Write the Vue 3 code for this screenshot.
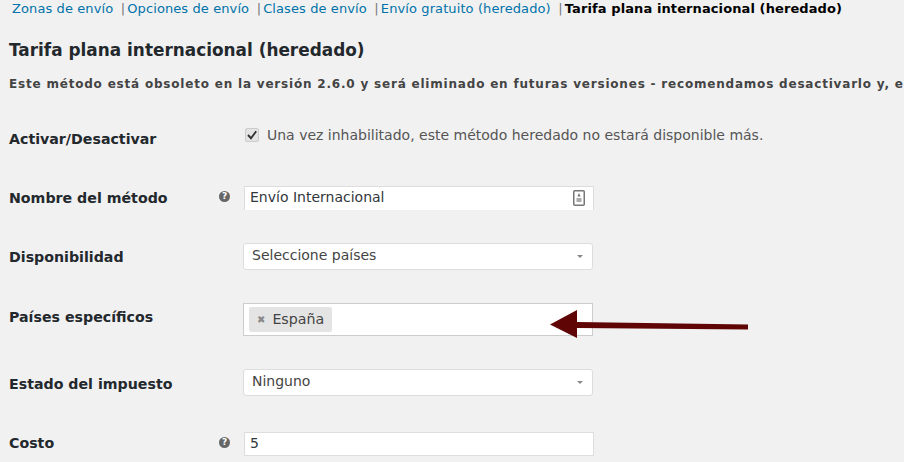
<template>
  <div class="page">
    <ul class="tabs">
      <li v-for="(tab, i) in tabs" :key="tab">
        <span v-if="i > 0" class="sep">|</span>
        <a :class="{ current: i === tabs.length - 1 }">{{ tab }}</a>
      </li>
    </ul>

    <h2>Tarifa plana internacional (heredado)</h2>
    <p class="notice">Este método está obsoleto en la versión 2.6.0 y será eliminado en futuras versiones - recomendamos desactivarlo y, en su lugar, usar</p>

    <div class="row row-check">
      <label>Activar/Desactivar</label>
      <div class="help"></div>
      <div class="check-line">
        <span class="checkbox">
          <svg width="10" height="10" viewBox="0 0 10 10"><path d="M1 5l3 3.2L9.2 1.2" fill="none" stroke="#333" stroke-width="1.9" /></svg>
        </span>
        <span>Una vez inhabilitado, este método heredado no estará disponible más.</span>
      </div>
    </div>

    <div class="row row-name">
      <label>Nombre del método</label>
      <div class="help"><i class="tip">?</i></div>
      <div class="input open">
        <span>Envío Internacional</span>
        <svg class="field-icon" width="12" height="16" viewBox="0 0 12 16">
          <rect x="0.75" y="0.75" width="10.5" height="14.5" rx="1" fill="#fff" stroke="#777" stroke-width="1.5" />
          <path d="M6 3l1.6 3.4H4.4z" fill="#777" />
          <rect x="3.5" y="8" width="5" height="4" fill="#aaa" />
        </svg>
      </div>
    </div>

    <div class="row row-avail">
      <label>Disponibilidad</label>
      <div class="help"></div>
      <div class="select"><span>Seleccione países</span><b class="caret"></b></div>
    </div>

    <div class="row row-countries">
      <label>Países específicos</label>
      <div class="help"></div>
      <div class="multi">
        <span class="chip"><i class="x">✖</i><span class="chip-text">España</span></span>
      </div>
    </div>

    <div class="row row-tax">
      <label>Estado del impuesto</label>
      <div class="help"></div>
      <div class="select"><span>Ninguno</span><b class="caret"></b></div>
    </div>

    <div class="row row-cost">
      <label>Costo</label>
      <div class="help"><i class="tip">?</i></div>
      <div class="input cost"><span>5</span></div>
    </div>

    <!-- flecha dibujada encima de la captura -->
    <svg class="arrow" width="200" height="30" viewBox="0 0 200 30">
      <path d="M1 15.5L28 1v12l171 2.5v5L28 19v10z" fill="#5f0505" />
    </svg>
  </div>
</template>

<script setup>
const tabs = [
  'Zonas de envío',
  'Opciones de envío',
  'Clases de envío',
  'Envío gratuito (heredado)',
  'Tarifa plana internacional (heredado)',
]
</script>

<style>
body {
  background: #f1f1f1;
}
</style>

<style scoped>
.page {
  position: relative;
  width: 904px;
  height: 462px;
  overflow: hidden;
  background: #f1f1f1;
  color: #23282d;
  font-family: "DejaVu Sans", sans-serif;
  font-size: 14px;
}

.tabs {
  display: flex;
  margin: 0;
  padding: 0 0 0 12px;
  list-style: none;
  height: 17px;
  font-size: 13px;
  line-height: 17px;
  letter-spacing: 0.1px;
  white-space: nowrap;
}
.tabs li {
  margin-right: 7.5px;
}
.sep {
  color: #777;
  margin-right: 2px;
}
.tabs a {
  color: #0073aa;
}
.tabs a.current {
  color: #000;
  font-weight: 700;
}

h2 {
  margin: 23px 0 0 9px;
  font-size: 16.9px;
  line-height: 20px;
  font-weight: 700;
  color: #23282d;
}
.notice {
  margin: 16px 0 0 9px;
  font-size: 12px;
  line-height: 16px;
  font-weight: 700;
  letter-spacing: 0.8px;
  color: #444;
  white-space: nowrap;
}

.row {
  display: flex;
  align-items: center;
  position: relative;
}
.row label {
  width: 210px;
  padding-left: 9px;
  font-size: 14.2px;
  font-weight: 700;
  color: #23282d;
  box-sizing: border-box;
}
.help {
  width: 33px;
  padding-left: 9px;
  box-sizing: border-box;
  display: flex;
  justify-content: flex-start;
}
.tip {
  width: 11px;
  height: 11px;
  border-radius: 50%;
  background: #666;
  color: #fff;
  font-size: 9px;
  font-style: normal;
  font-weight: 700;
  line-height: 11px;
  text-align: center;
  margin-bottom: 3px;
}

.row-check {
  margin-top: 37px;
  height: 20px;
}
.check-line {
  display: flex;
  align-items: center;
  gap: 8px;
  margin-left: 3px;
  margin-top: -9px;
  color: #555;
}
.checkbox {
  width: 12px;
  height: 12px;
  background: #e4e4e4;
  border: 1px solid #ccc;
  border-radius: 2px;
  display: flex;
  align-items: center;
  justify-content: center;
  box-sizing: content-box;
  margin-left: -1px;
}

.input {
  width: 350px;
  height: 24px;
  box-sizing: border-box;
  margin-left: 1px;
  padding: 0 6px 0 5px;
  display: flex;
  align-items: center;
  justify-content: space-between;
  background: #fff;
  border: 1px solid #ddd;
  color: #32373c;
}
.input.open {
  border-bottom: 0;
  padding-bottom: 4px;
}
.input.cost {
  padding-bottom: 2px;
}
.field-icon {
  margin-right: 2px;
  margin-top: 2px;
}

.select {
  width: 350px;
  height: 27px;
  box-sizing: border-box;
  padding: 0 8px 4px;
  display: flex;
  align-items: center;
  justify-content: space-between;
  background: #fff;
  border: 1px solid #ddd;
  border-radius: 3px;
  color: #444;
}
.caret {
  width: 0;
  height: 0;
  border-left: 3px solid transparent;
  border-right: 3px solid transparent;
  border-top: 3px solid #888;
  margin-right: 1px;
  margin-top: 4px;
}

.multi {
  width: 350px;
  height: 33px;
  box-sizing: border-box;
  padding: 3px 5px;
  background: #fff;
  border: 1px solid #ccc;
}
.chip {
  display: inline-flex;
  align-items: center;
  height: 25px;
  width: 83px;
  box-sizing: border-box;
  padding: 0 0 0 8px;
  background: #e4e4e4;
  border-radius: 2px;
  color: #444;
}
.chip-text {
  margin-top: -2px;
  font-size: 14.2px;
}
.x {
  font-style: normal;
  font-size: 10px;
  color: #888;
  margin-right: 7px;
}

.row-name {
  margin-top: 37px;
}
.row-avail {
  margin-top: 33px;
}
.row-countries {
  margin-top: 33px;
}
.row-countries label {
  margin-top: -6px;
}
.row-tax {
  margin-top: 33px;
}
.row-tax label {
  margin-top: 3px;
}
.row-cost {
  margin-top: 36px;
}
.row-cost label {
  margin-top: -2px;
}

.arrow {
  position: absolute;
  left: 549px;
  top: 309px;
}
</style>
